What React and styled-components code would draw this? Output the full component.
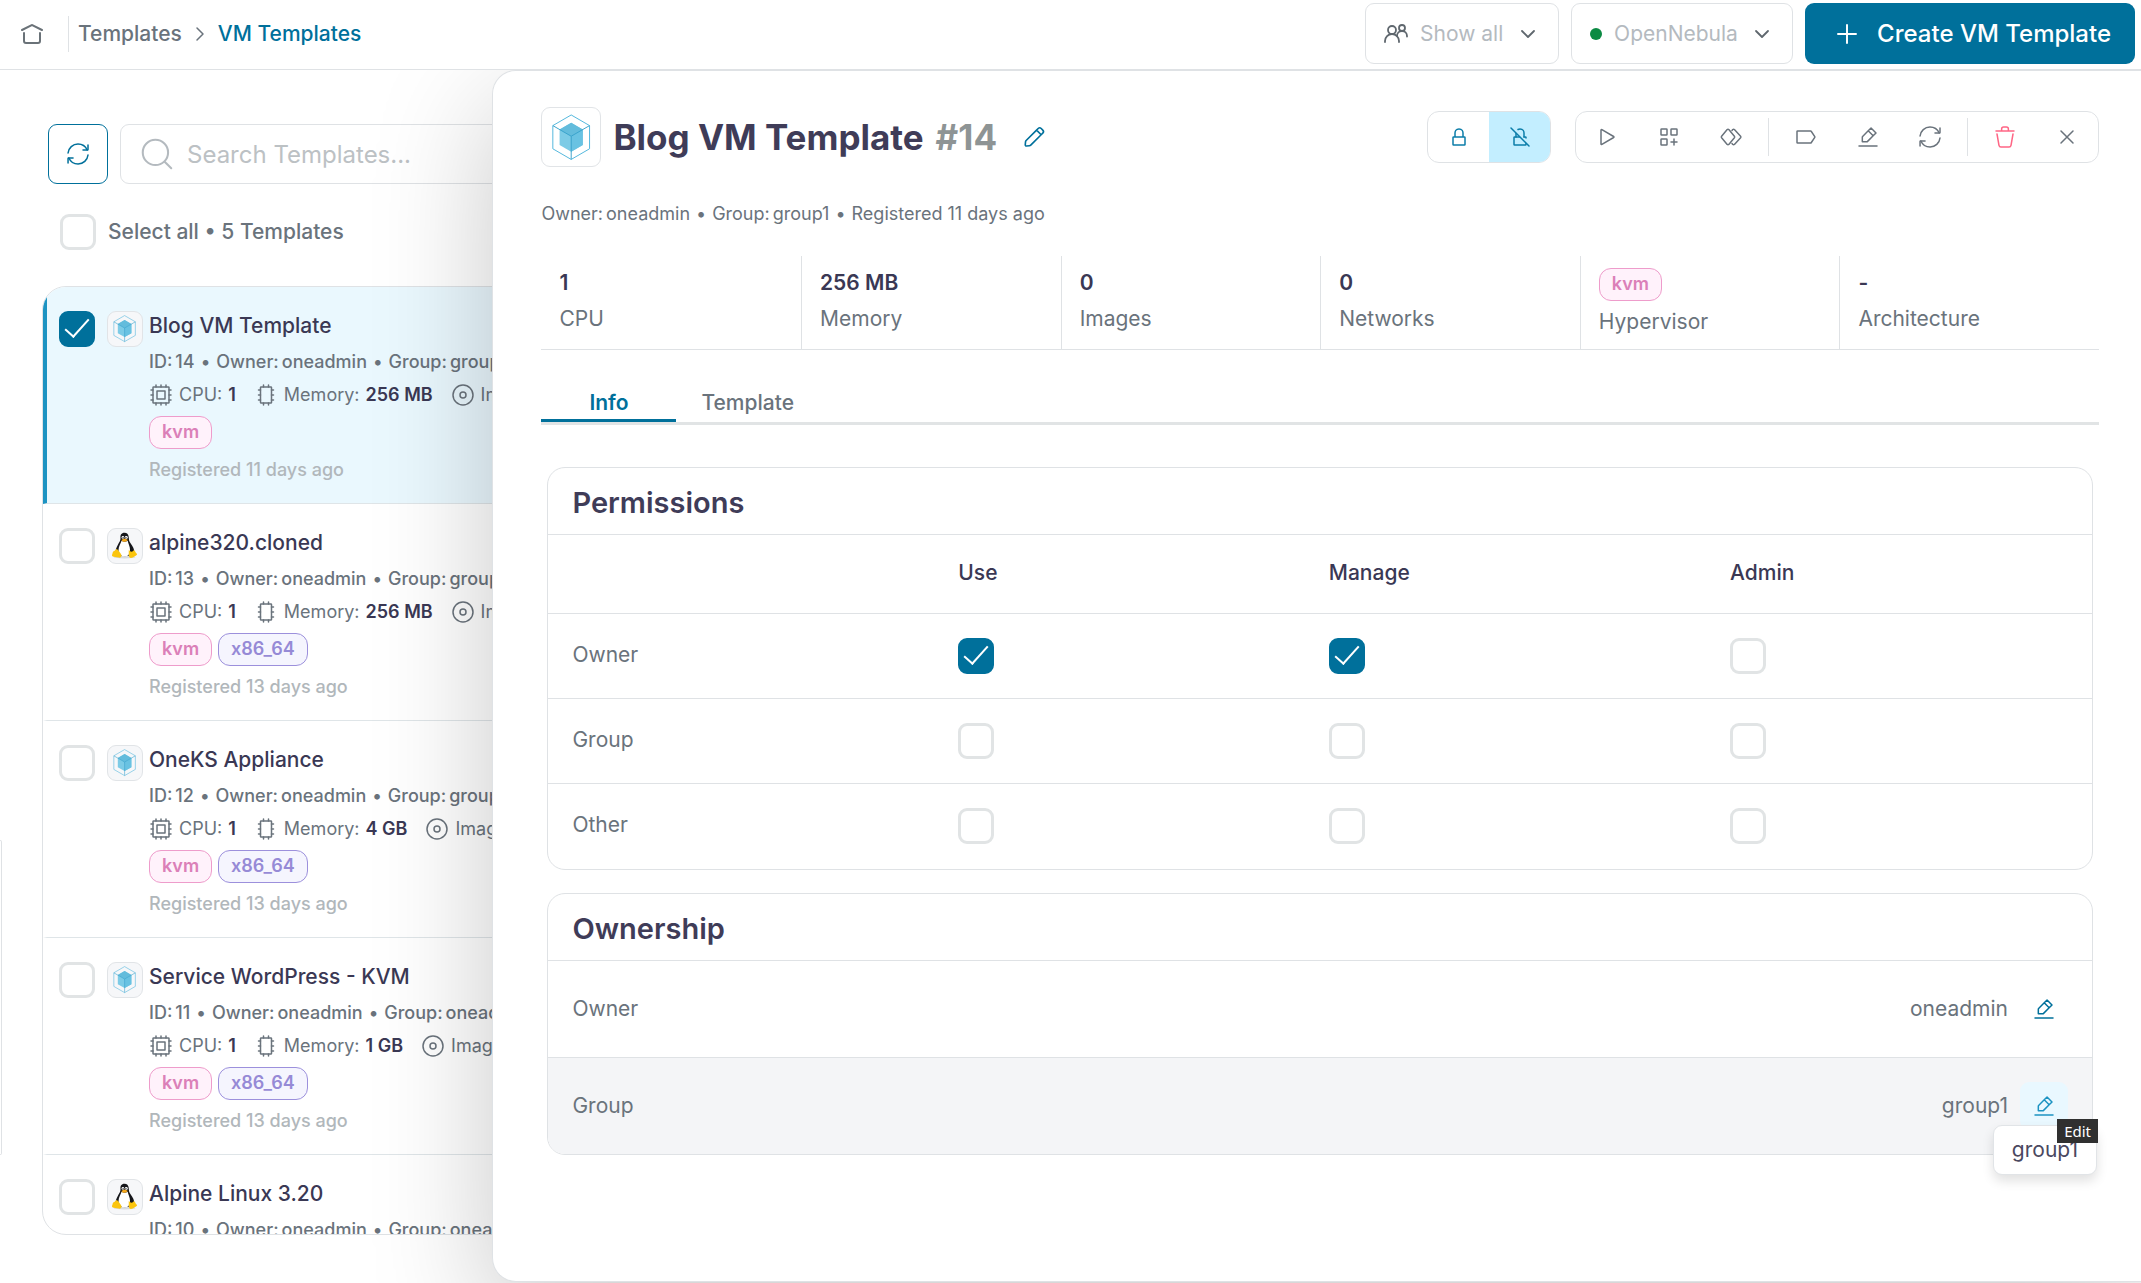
import React, { useState } from "react";
import styled, { createGlobalStyle, css } from "styled-components";

const ICONS = {
  home: [
    "M2 8L11.7317 3.13416C11.9006 3.04971 12.0994 3.0497 12.2683 3.13416L22 8",
    "M20 11V19C20 20.1046 19.1046 21 18 21H6C4.89543 21 4 20.1046 4 19V11",
  ],
  right: ["M9 6L15 12L9 18"],
  down: ["M6 9L12 15L18 9"],
  plus: ["M6 12H12M18 12H12M12 12V6M12 12V18"],
  search: ["M17 17L21 21", "M3 11a8 8 0 1 0 16 0a8 8 0 1 0 -16 0"],
  refresh: [
    "M21.1679 8C19.6247 4.46819 16.1006 2 11.9999 2C6.81459 2 2.55104 5.94668 2.04932 11",
    "M17 8H21.4C21.7314 8 22 7.73137 22 7.4V3",
    "M2.88146 16C4.42458 19.5318 7.94874 22 12.0494 22C17.2347 22 21.4983 18.0533 22 13",
    "M7.04932 16H2.64932C2.31795 16 2.04932 16.2686 2.04932 16.6V21",
  ],
  group: [
    "M1 20V19C1 15.134 4.13401 12 8 12C11.866 12 15 15.134 15 19V20",
    "M13 14C13 11.2386 15.2386 9 18 9C20.7614 9 23 11.2386 23 14V14.5",
    "M8 12a4 4 0 1 0 0 -8a4 4 0 1 0 0 8Z",
    "M18 9a3 3 0 1 0 0 -6a3 3 0 1 0 0 6Z",
  ],
  lock: [
    "M16 12H17.4C17.7314 12 18 12.2686 18 12.6V19.4C18 19.7314 17.7314 20 17.4 20H6.6C6.26863 20 6 19.7314 6 19.4V12.6C6 12.2686 6.26863 12 6.6 12H8M16 12V8C16 6.66667 15.2 4 12 4C8.8 4 8 6.66667 8 8V12M16 12H8",
  ],
  unlock: [
    "M11.5 12H6.6C6.26863 12 6 12.2686 6 12.6V19.4C6 19.7314 6.26863 20 6.6 20H17.4C17.7314 20 18 19.7314 18 19.4V18.5",
    "M16 12H17.4C17.7314 12 18 12.2686 18 12.6V13",
    "M16 12V8C16 6.66667 15.2 4 12 4C11.2 4 10.5 4.2 10 4.5M8 8.5V12",
    "M3 3L21 21",
  ],
  play: [
    "M6.90588 4.53682C6.50592 4.2998 6 4.58808 6 5.05299V18.947C6 19.4119 6.50592 19.7002 6.90588 19.4632L18.629 12.5162C19.0211 12.2838 19.0211 11.7162 18.629 11.4838L6.90588 4.53682Z",
  ],
  gridPlus: [
    "M14 17H17M20 17H17M17 17V14M17 17V20",
    "M4 9.4V4.6C4 4.3 4.3 4 4.6 4H9.4C9.7 4 10 4.3 10 4.6V9.4C10 9.7 9.7 10 9.4 10H4.6C4.3 10 4 9.7 4 9.4Z",
    "M4 19.4V14.6C4 14.3 4.3 14 4.6 14H9.4C9.7 14 10 14.3 10 14.6V19.4C10 19.7 9.7 20 9.4 20H4.6C4.3 20 4 19.7 4 19.4Z",
    "M14 9.4V4.6C14 4.3 14.3 4 14.6 4H19.4C19.7 4 20 4.3 20 4.6V9.4C20 9.7 19.7 10 19.4 10H14.6C14.3 10 14 9.7 14 9.4Z",
  ],
  clone: [
    "M8.2 19.4L2.6 12.8C2.2 12.3 2.2 11.7 2.6 11.2L8.2 4.6C8.6 4.1 9.4 4.1 9.8 4.6L15.4 11.2C15.8 11.7 15.8 12.3 15.4 12.8L9.8 19.4C9.4 19.9 8.6 19.9 8.2 19.4Z",
    "M13 5.5L13.8 4.6C14.2 4.1 15 4.1 15.4 4.6L21.6 11.2C22 11.7 22 12.3 21.6 12.8L15.4 19.4C15 19.9 14.2 19.9 13.8 19.4L13 18.5",
  ],
  label: [
    "M3 17.4V6.6C3 6.26863 3.26863 6 3.6 6H16.6789C16.8795 6 17.0668 6.10026 17.1781 6.26718L20.7781 11.6672C20.9125 11.8687 20.9125 12.1313 20.7781 12.3328L17.1781 17.7328C17.0668 17.8997 16.8795 18 16.6789 18H3.6C3.26863 18 3 17.7314 3 17.4Z",
  ],
  edit: [
    "M3 21H21",
    "M12.2218 5.82839L15.0503 2.99996L20 7.94971L17.1716 10.7781M12.2218 5.82839L6.61522 11.435C6.42769 11.6225 6.32233 11.8769 6.32233 12.1421V16.6776H10.8579C11.1231 16.6776 11.3774 16.5723 11.565 16.3847L17.1716 10.7781M12.2218 5.82839L17.1716 10.7781",
  ],
  pencil: [
    "M14.3632 5.65156L15.8431 4.17157C16.6242 3.39052 17.8905 3.39052 18.6716 4.17157L20.0858 5.58579C20.8668 6.36683 20.8668 7.63316 20.0858 8.41421L18.6058 9.8942M14.3632 5.65156L4.74749 15.2672C4.41542 15.5993 4.21079 16.0376 4.16947 16.5054L3.92738 19.2459C3.87261 19.8659 4.39148 20.3848 5.0115 20.33L7.75191 20.0879C8.21972 20.0466 8.65806 19.8419 8.99013 19.5099L18.6058 9.8942M14.3632 5.65156L18.6058 9.8942",
  ],
  trash: [
    "M20 9L18.005 20.3463C17.8369 21.3026 17.0062 22 16.0353 22H7.96474C6.99379 22 6.1631 21.3026 5.99496 20.3463L4 9",
    "M21 6H3M8.625 6V4C8.625 2.89543 9.52043 2 10.625 2H13.375C14.4796 2 15.375 2.89543 15.375 4V6",
  ],
  close: ["M6 18L18 6M6 6L18 18"],
  cpu: [
    "M4 19.4V4.6C4 4.3 4.3 4 4.6 4H19.4C19.7 4 20 4.3 20 4.6V19.4C20 19.7 19.7 20 19.4 20H4.6C4.3 20 4 19.7 4 19.4Z",
    "M8 16V8H16V16H8Z",
    "M7 4V2M12 4V2M17 4V2M7 22V20M12 22V20M17 22V20M4 7H2M4 12H2M4 17H2M22 7H20M22 12H20M22 17H20",
  ],
  memory: [
    "M6.5 19.4V4.6C6.5 4.3 6.8 4 7.1 4H16.9C17.2 4 17.5 4.3 17.5 4.6V19.4C17.5 19.7 17.2 20 16.9 20H7.1C6.8 20 6.5 19.7 6.5 19.4Z",
    "M9.5 4V2M14.5 4V2M9.5 22V20M14.5 22V20M6.5 7H4.5M6.5 12H4.5M6.5 17H4.5M19.5 7H17.5M19.5 12H17.5M19.5 17H17.5",
  ],
  disc: [
    "M12 22a10 10 0 1 0 0 -20a10 10 0 1 0 0 20Z",
    "M12 15a3 3 0 1 0 0 -6a3 3 0 1 0 0 6Z",
  ],
};

const Icon = ({ name, size = 24, weight = 1.5 }) => (
  <IconSvg $size={size} viewBox='0 0 24 24' strokeWidth={weight} aria-hidden='true'>
    {ICONS[name].map((d) => (
      <path key={d} d={d} />
    ))}
  </IconSvg>
);

const CubeLogo = () => (
  <LogoSvg viewBox='0 0 40 48' aria-hidden='true'>
    <path d='M20 9L32 16V32L20 39L8 32V16Z' fill='#7ccbe6' />
    <path d='M20 9L32 16L20 23L8 16Z' fill='#63bcdc' />
    <path d='M20 23L32 16V32L20 39Z' fill='#69c2e2' />
    <path d='M20 1L39 12V36L20 47L1 36V12Z' fill='none' stroke='#4fb5dc' />
    <path d='M1 12L20 23L39 12M20 23V47' fill='none' stroke='#38a2cb' />
  </LogoSvg>
);

const TuxLogo = () => (
  <LogoSvg viewBox='0 0 40 40' aria-hidden='true'>
    <ellipse cx='20' cy='37' rx='16' ry='2' fill='#d9dbdd' />
    <path
      d='M20 1C15 1 13.5 4.5 14 9C14.3 13 12 15 10 19C8 23 6 27 7 31C9 37 31 37 34 31C35 26 32 21 29 17C26 13 26.5 11 26 7C25.5 3 23.5 1 20 1Z'
      fill='#15161a'
    />
    <path
      d='M15.5 13C14.5 17 11 21 11 27C11 32 15 36 20 36C26 36 28 32 28 27C28 21 25.5 18 24.5 13C22 15 18 15 15.5 13Z'
      fill='#fff'
    />
    <circle cx='17.5' cy='8' r='2' fill='#fff' />
    <circle cx='22.5' cy='8' r='2.2' fill='#fff' />
    <circle cx='17.8' cy='8.3' r='0.9' fill='#111' />
    <circle cx='22' cy='8.3' r='0.9' fill='#111' />
    <path d='M15.5 11.5L20 9.5L24.5 11.5C24 13.5 21.5 14.5 19.5 14.5C17.5 14.5 15.8 13.5 15.5 11.5Z' fill='#f5a81c' />
    <path d='M8 25C10 25 13 30 15 33C16.5 36 14 38.5 11 37.5C8 36.5 4 37 2 35.5C0.5 34.5 2.5 32 2.5 30C3 28 6 28 8 25Z' fill='#fbc50e' />
    <path d='M26 27C27.5 26.5 28 29 30 29C32.5 29 33 26.5 34 27C36 28 35.5 30 38 32C39.5 33.5 37 34.5 34.5 36C32 38 28.5 39 27 37C25.5 34.5 26.5 30 26 27Z' fill='#fbc50e' />
  </LogoSvg>
);

const LOGOS = { cube: CubeLogo, tux: TuxLogo };

const templates = [
  { id: 14, name: "Blog VM Template", logo: "cube", group: "group1", memory: "256 MB", tags: ["kvm"], age: 11 },
  { id: 13, name: "alpine320.cloned", logo: "tux", group: "group1", memory: "256 MB", tags: ["kvm", "x86_64"], age: 13 },
  { id: 12, name: "OneKS Appliance", logo: "cube", group: "group1", memory: "4 GB", tags: ["kvm", "x86_64"], age: 13 },
  { id: 11, name: "Service WordPress - KVM", logo: "cube", group: "oneadmin", memory: "1 GB", tags: ["kvm", "x86_64"], age: 13 },
  { id: 10, name: "Alpine Linux 3.20", logo: "tux", group: "oneadmin", memory: "256 MB", tags: ["kvm", "x86_64"], age: 13 },
];

const stats = [
  { value: "1", label: "CPU" },
  { value: "256 MB", label: "Memory" },
  { value: "0", label: "Images" },
  { value: "0", label: "Networks" },
  { tag: "kvm", label: "Hypervisor" },
  { value: "-", label: "Architecture" },
];

const actions = [
  ["play", "Instantiate"],
  ["gridPlus", "Create app"],
  ["clone", "Clone"],
  null,
  ["label", "Labels"],
  ["edit", "Update"],
  ["refresh", "Refresh"],
  null,
  ["trash", "Delete"],
  ["close", "Close"],
];

const rights = ["Use", "Manage", "Admin"];

function TemplateItem({ item, checked, onToggle }) {
  const Logo = LOGOS[item.logo];
  return (
    <Item $active={checked}>
      <Checkbox type='checkbox' aria-label={item.name} checked={checked} onChange={onToggle} />
      <LogoBox>
        <Logo />
      </LogoBox>
      <ItemBody>
        <ItemName>{item.name}</ItemName>
        <Meta>
          <Pair><span>ID:</span><span>{item.id}</span></Pair>
          <span>•</span>
          <Pair><span>Owner:</span><span>oneadmin</span></Pair>
          <span>•</span>
          <Pair><span>Group:</span><span>{item.group}</span></Pair>
        </Meta>
        <Specs>
          <Spec><Icon name='cpu' />CPU: <b>1</b></Spec>
          <Spec><Icon name='memory' />Memory: <b>{item.memory}</b></Spec>
          <Spec><Icon name='disc' />Images: <b>1</b></Spec>
        </Specs>
        <Tags>
          {item.tags.map((tag) => (
            <Tag key={tag} $kind={tag}>{tag}</Tag>
          ))}
        </Tags>
        <Registered>Registered {item.age} days ago</Registered>
      </ItemBody>
    </Item>
  );
}

function Permissions() {
  const [granted, setGranted] = useState({ "Owner Use": true, "Owner Manage": true });

  const toggle = (key) => setGranted({ ...granted, [key]: !granted[key] });

  return (
    <Card>
      <CardTitle>Permissions</CardTitle>
      <Table>
        <thead>
          <tr>
            <Th $width='25%' aria-label='Role' />
            <Th $width='24%'>Use</Th>
            <Th $width='26%'>Manage</Th>
            <Th $width='25%'>Admin</Th>
          </tr>
        </thead>
        <tbody>
          {["Owner", "Group", "Other"].map((role) => (
            <tr key={role}>
              <Td>{role}</Td>
              {rights.map((right) => {
                const key = role + " " + right;
                return (
                  <Td key={key}>
                    <Checkbox
                      type='checkbox'
                      aria-label={key}
                      checked={!!granted[key]}
                      onChange={() => toggle(key)}
                    />
                  </Td>
                );
              })}
            </tr>
          ))}
        </tbody>
      </Table>
    </Card>
  );
}

function Ownership() {
  return (
    <Card $open>
      <CardTitle>Ownership</CardTitle>
      <OwnerRow>
        <span>Owner</span>
        <OwnerValue>
          oneadmin
          <EditButton aria-label='Edit owner'><Icon name='edit' /></EditButton>
        </OwnerValue>
      </OwnerRow>
      <OwnerRow $hover>
        <span>Group</span>
        <OwnerValue>
          group1
          <EditButton $hover aria-label='Edit group'><Icon name='edit' /></EditButton>
        </OwnerValue>
        <Popup>
          group1
          <Tooltip role='tooltip'>Edit</Tooltip>
        </Popup>
      </OwnerRow>
    </Card>
  );
}

function Detail() {
  return (
    <Drawer>
      <DetailHeader>
        <LogoBox $large>
          <CubeLogo />
        </LogoBox>
        <Title>
          Blog VM Template <span>#14</span>
        </Title>
        <RenameButton aria-label='Rename'><Icon name='pencil' size={26} /></RenameButton>
        <LockGroup>
          <LockButton aria-label='Lock'><Icon name='lock' /></LockButton>
          <LockButton $active aria-label='Unlock'><Icon name='unlock' /></LockButton>
        </LockGroup>
        <Toolbar>
          {actions.map((action, idx) =>
            action ? (
              <ToolButton key={idx} aria-label={action[1]} $danger={action[0] === "trash"}>
                <Icon name={action[0]} />
              </ToolButton>
            ) : (
              <ToolDivider key={idx} />
            )
          )}
        </Toolbar>
      </DetailHeader>
      <Meta>
        <Pair><span>Owner:</span><span>oneadmin</span></Pair>
        <span>•</span>
        <Pair><span>Group:</span><span>group1</span></Pair>
        <span>•</span>
        <span>Registered 11 days ago</span>
      </Meta>
      <Stats>
        {stats.map((stat) => (
          <Stat key={stat.label}>
            {stat.tag ? <Tag $kind={stat.tag}>{stat.tag}</Tag> : <b>{stat.value}</b>}
            <span>{stat.label}</span>
          </Stat>
        ))}
      </Stats>
      <Tabs role='tablist'>
        <Tab role='tab' aria-selected='true' $active>Info</Tab>
        <Tab role='tab' aria-selected='false'>Template</Tab>
      </Tabs>
      <Cards>
        <Permissions />
        <Ownership />
      </Cards>
    </Drawer>
  );
}

function App() {
  const [selected, setSelected] = useState([14]);

  const toggle = (id) =>
    setSelected(selected.includes(id) ? selected.filter((s) => s !== id) : [...selected, id]);

  return (
    <>
      <GlobalStyle />
      <Page>
        <Header>
          <HomeLink href='#home' aria-label='Home'><Icon name='home' weight={2} /></HomeLink>
          <Breadcrumb>
            <Crumb href='#templates'>Templates</Crumb>
            <Icon name='right' />
            <Crumb href='#vm-templates' $current>VM Templates</Crumb>
          </Breadcrumb>
          <SelectBox>
            <Icon name='group' weight={1.8} />
            <Select aria-label='Owner filter'><option>Show all</option></Select>
            <Icon name='down' weight={1.8} />
          </SelectBox>
          <SelectBox>
            <Dot />
            <Select aria-label='Zone'><option>OpenNebula</option></Select>
            <Icon name='down' weight={1.8} />
          </SelectBox>
          <CreateButton><Icon name='plus' size={36} weight={1.3} />Create VM Template</CreateButton>
        </Header>
        <Main>
          <SearchRow>
            <RefreshButton aria-label='Refresh'><Icon name='refresh' /></RefreshButton>
            <SearchBox>
              <Icon name='search' size={38} weight={1.3} />
              <SearchInput type='search' aria-label='Search' placeholder='Search Templates...' />
            </SearchBox>
          </SearchRow>
          <SelectAll>
            <Checkbox type='checkbox' />
            <span>Select all • 5 Templates</span>
          </SelectAll>
          <List>
            {templates.map((item) => (
              <TemplateItem
                key={item.id}
                item={item}
                checked={selected.includes(item.id)}
                onToggle={() => toggle(item.id)}
              />
            ))}
          </List>
          <SideEdge />
          <Detail />
        </Main>
      </Page>
    </>
  );
}

export default App;

const GlobalStyle = createGlobalStyle`
  * {
    box-sizing: border-box;
  }

  body {
    margin: 0;
    background: #fff;
    color: #6a737c;
    font-family: Inter, "Liberation Sans", sans-serif;
    font-size: 21px;
  }

  button, input, select {
    font: inherit;
    color: inherit;
  }

  button {
    cursor: pointer;
    padding: 0;
    border: 0;
    background: none;
  }
`;

const IconSvg = styled.svg`
  flex: none;
  display: block;
  width: ${(props) => props.$size}px;
  height: ${(props) => props.$size}px;
  fill: none;
  stroke: currentColor;
  stroke-linecap: round;
  stroke-linejoin: round;
`;

const LogoSvg = styled.svg`
  display: block;
  width: 80%;
  height: 80%;
`;

const Page = styled.div`
  display: flex;
  flex-direction: column;
  height: 100vh;
  overflow: hidden;
`;

const Header = styled.header`
  display: flex;
  align-items: center;
  gap: 12px;
  padding: 3px 6px 5px 20px;
  border-bottom: 1px solid #dfe2e5;
`;

const HomeLink = styled.a`
  color: #6a7278;
`;

const Breadcrumb = styled.nav`
  display: flex;
  align-items: center;
  gap: 6px;
  flex: 1;
  height: 36px;
  margin-left: 12px;
  padding-left: 9px;
  border-left: 1px solid #dfe2e5;
`;

const Crumb = styled.a`
  color: ${(props) => (props.$current ? "#00709b" : "#6a737c")};
  font-weight: 500;
  text-decoration: none;
`;

const SelectBox = styled.label`
  display: flex;
  align-items: center;
  gap: 12px;
  height: 61px;
  padding: 0 18px;
  border: 1px solid #dfe2e5;
  border-radius: 9px;
  color: #5f676e;
`;

const Select = styled.select`
  appearance: none;
  padding: 0;
  border: 0;
  background: none;
  color: #b4babf;
`;

const Dot = styled.i`
  width: 12px;
  height: 12px;
  border-radius: 50%;
  background: #0c8a43;
`;

const CreateButton = styled.button`
  display: flex;
  align-items: center;
  gap: 12px;
  height: 61px;
  padding: 0 24px;
  border-radius: 9px;
  background: #00709b;
  color: #fff;
  font-size: 24px;
  font-weight: 500;
`;

const Main = styled.main`
  position: relative;
  display: flex;
  flex-direction: column;
  flex: 1;
  min-height: 0;
  padding: 54px 42px 48px;
  overflow: hidden;
`;

const SearchRow = styled.div`
  display: flex;
  gap: 12px;
  padding-left: 6px;
`;

const RefreshButton = styled.button`
  display: grid;
  place-items: center;
  width: 60px;
  height: 60px;
  border: 1px solid #00709b;
  border-radius: 9px;
  color: #00709b;
`;

const SearchBox = styled.label`
  display: flex;
  align-items: center;
  gap: 11px;
  flex: 1;
  padding: 0 17px;
  border: 1px solid #dfe2e5;
  border-radius: 9px;
  color: #b4babf;
`;

const SearchInput = styled.input`
  flex: 1;
  padding: 0;
  border: 0;
  outline: 0;
  background: none;
  font-size: 24px;

  &::placeholder {
    color: #bcc1c4;
    opacity: 1;
  }
`;

const SelectAll = styled.label`
  display: flex;
  align-items: center;
  gap: 12px;
  margin: 30px 18px 36px;
  font-weight: 500;

  span {
    padding-bottom: 2px;
  }
`;

const Checkbox = styled.input`
  appearance: none;
  flex: none;
  display: grid;
  place-items: center;
  width: 36px;
  height: 36px;
  margin: 0;
  border: 3px solid #e1e4e5;
  border-radius: 9px;
  background: #fff;

  &:checked {
    border-color: #00709b;
    background: #00709b;
  }

  &:checked::before {
    content: "";
    width: 10px;
    height: 22px;
    border: solid #fff;
    border-width: 0 2px 2px 0;
    transform: translateY(-4px) rotate(42deg);
  }
`;

const List = styled.ul`
  flex: 1;
  min-height: 0;
  margin: 0;
  padding: 0;
  overflow: hidden;
  border: 1px solid #dfe2e5;
  border-radius: 24px;
  list-style: none;
`;

const LogoBox = styled.div`
  flex: none;
  display: grid;
  place-items: center;
  width: 36px;
  height: 36px;
  margin: 0 6px 0 12px;
  border: 1px solid #e1e4e7;
  border-radius: 9px;
  background: #f6f7f9;

  ${(props) =>
    props.$large &&
    css`
      width: 60px;
      height: 60px;
      margin: 0 12px 0 0;
      background: #fff;
    `}
`;

const ItemBody = styled.div`
  display: flex;
  flex-direction: column;
  gap: 9px;
  white-space: nowrap;
`;

const ItemName = styled.div`
  color: #3a3854;
  font-weight: 500;
  line-height: 30px;
`;

const Meta = styled.div`
  display: flex;
  gap: 6px;
  font-size: 18px;
  line-height: 24px;
`;

const Item = styled.li`
  display: flex;
  padding: 24px 12px 21px;
  border-left: 4px solid ${(props) => (props.$active ? "#1c93c2" : "transparent")};
  border-bottom: 1px solid #dfe5e8;
  background: ${(props) => (props.$active ? "#eaf8fe" : "none")};

  ${Meta} {
    font-weight: 500;
  }
`;

const Pair = styled.span`
  display: flex;
  gap: 3px;
`;

const Specs = styled.div`
  display: flex;
  gap: 18px;
`;

const Spec = styled.span`
  display: flex;
  align-items: center;
  gap: 6px;
  font-size: 18px;
  line-height: 24px;

  b {
    color: #3a3854;
    font-weight: 600;
  }
`;

const Tags = styled.div`
  display: flex;
  gap: 6px;
`;

const Tag = styled.span`
  height: 33px;
  padding: 0 12px;
  border: 1px solid;
  border-radius: 12px;
  font-size: 18px;
  font-weight: 600;
  line-height: 30px;

  ${(props) =>
    props.$kind === "kvm"
      ? css`
          color: #db80b8;
          border-color: #ee9ccb;
          background: #fff2fb;
        `
      : css`
          color: #968ad6;
          border-color: #9c90dc;
          background: #f5f5fe;
        `}
`;

const Registered = styled.div`
  color: #b1b7bb;
  font-size: 18px;
  font-weight: 500;
  line-height: 24px;
`;

// Right edge of the collapsed navigation flyout
const SideEdge = styled.div`
  position: absolute;
  left: 0;
  bottom: 128px;
  width: 2px;
  height: 315px;
  border: 1px solid #dfe2e5;
  border-left: 0;
  border-radius: 0 6px 6px 0;
`;

const Drawer = styled.section`
  position: absolute;
  top: 0;
  right: 0;
  bottom: 1px;
  width: 77%;
  padding: 36px 42px 36px 48px;
  overflow: auto;
  border: 1px solid #dfe2e5;
  border-right: 0;
  border-radius: 24px 0 0 24px;
  background: #fff;
  box-shadow: 0 36px 120px rgba(0, 0, 0, 0.22);
`;

const DetailHeader = styled.div`
  display: flex;
  align-items: center;
  margin-bottom: 35px;
`;

const Title = styled.h1`
  display: flex;
  gap: 12px;
  margin: 0;
  color: #3f3c58;
  font-size: 35px;
  font-weight: 700;

  span {
    color: #8e9495;
  }
`;

const RenameButton = styled.button`
  margin: 0 auto 0 24px;
  color: #00709b;
`;

const LockGroup = styled.div`
  display: flex;
  overflow: hidden;
  border: 1px solid #dfe2e5;
  border-radius: 12px;
`;

const LockButton = styled.button`
  display: grid;
  place-items: center;
  width: 61px;
  height: 50px;
  color: #0b7da9;
  background: ${(props) => (props.$active ? "#c3eeff" : "none")};
`;

const Toolbar = styled.div`
  display: flex;
  align-items: center;
  margin-left: 24px;
  border: 1px solid #dfe2e5;
  border-radius: 12px;
`;

const ToolButton = styled.button`
  display: grid;
  place-items: center;
  width: 62px;
  height: 50px;
  color: ${(props) => (props.$danger ? "#ff6685" : "#6a737c")};
`;

const ToolDivider = styled.i`
  width: 1px;
  height: 38px;
  margin: 0 6px;
  background: #dfe2e5;
`;

const Stats = styled.div`
  display: grid;
  grid-template-columns: repeat(6, 1fr);
  margin-top: 30px;
  border-bottom: 1px solid #dfe2e5;
`;

const Stat = styled.div`
  display: flex;
  flex-direction: column;
  align-items: flex-start;
  gap: 6px;
  height: 93px;
  padding: 12px 18px;

  & + & {
    border-left: 1px solid #dfe2e5;
  }

  b {
    color: #3a3854;
    font-weight: 600;
    line-height: 30px;
  }

  > span:last-child {
    line-height: 30px;
  }
`;

const Tabs = styled.div`
  display: flex;
  margin-top: 35px;
  border-bottom: 3px solid #e1e4e5;
`;

const Tab = styled.button`
  min-width: 135px;
  height: 37px;
  padding: 0 25px;
  border-bottom: 3px solid ${(props) => (props.$active ? "#00709b" : "transparent")};
  color: ${(props) => (props.$active ? "#00709b" : "#6a737c")};
  font-weight: ${(props) => (props.$active ? 600 : 500)};
`;

const Cards = styled.div`
  display: flex;
  flex-direction: column;
  gap: 23px;
  padding: 42px 6px 0;
`;

const Card = styled.section`
  overflow: ${(props) => (props.$open ? "visible" : "hidden")};
  border: 1px solid #dfe2e5;
  border-radius: 18px;
`;

const CardTitle = styled.h2`
  margin: 0;
  padding: 17px 24px 13px;
  color: #3f3c58;
  font-size: 29px;
  font-weight: 600;
  line-height: 36px;
`;

const Table = styled.table`
  width: 100%;
  table-layout: fixed;
  border-collapse: collapse;
`;

const Th = styled.th`
  width: ${(props) => props.$width};
  height: 79px;
  padding: 0 24px 3px;
  border-top: 1px solid #dfe2e5;
  color: #3a3854;
  font-weight: 500;
  text-align: left;
`;

const Td = styled.td`
  height: 85px;
  padding: 0 24px;
  border-top: 1px solid #dfe2e5;

  &:first-child {
    padding-bottom: 3px;
  }
`;

const OwnerRow = styled.div`
  position: relative;
  display: flex;
  align-items: center;
  justify-content: space-between;
  height: 97px;
  padding: 0 24px;
  border-top: 1px solid #dfe2e5;

  ${(props) =>
    props.$hover &&
    css`
      border-radius: 0 0 17px 17px;
      background: #f4f5f7;
    `}
`;

const OwnerValue = styled.div`
  display: flex;
  align-items: center;
  gap: 12px;
`;

const EditButton = styled.button`
  display: grid;
  place-items: center;
  width: 48px;
  height: 48px;
  border-radius: 9px;
  color: ${(props) => (props.$hover ? "#1c93c2" : "#00709b")};
  background: ${(props) => (props.$hover ? "#e9f8ff" : "none")};
`;

const Popup = styled.div`
  position: absolute;
  top: 67px;
  right: -5px;
  padding: 10px 18px;
  border: 1px solid #e1e4e7;
  border-radius: 9px;
  background: #fff;
  box-shadow: 0 6px 12px rgba(0, 0, 0, 0.12);
  color: #4a4860;
  line-height: 28px;
`;

const Tooltip = styled.span`
  position: absolute;
  top: -7px;
  right: -2px;
  padding: 0 7px;
  background: #303030;
  color: #fff;
  font-family: "Noto Sans", sans-serif;
  font-size: 15px;
  line-height: 24px;
`;
